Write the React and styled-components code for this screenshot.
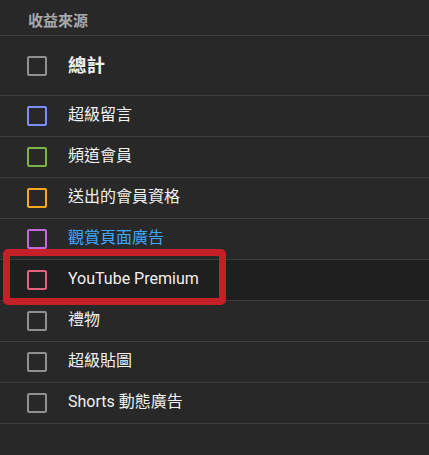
import React from "react";
import styled, { createGlobalStyle } from "styled-components";

const Global = createGlobalStyle`
  html, body { margin: 0; padding: 0; background: #282828; }
  body { font-family: Roboto, "Noto Sans CJK TC", "Noto Sans", sans-serif; }
`;

const Panel = styled.div`
  width: 429px;
  height: 455px;
  background: #282828;
  overflow: hidden;
`;

const Header = styled.div`
  height: 36px;
  box-sizing: border-box;
  display: flex;
  align-items: center;
  padding: 3px 0 0 28px;
  color: #aaaaaa;
  font-size: 15px;
  font-weight: 700;
  border-bottom: 1px solid #3e3e3e;
`;

const Row = styled.div`
  position: relative;
  height: ${(p) => (p.$big ? 59 : 40)}px;
  display: flex;
  align-items: center;
  padding-left: 27px;
  gap: 21px;
  border-bottom: 1px solid #3e3e3e;
  background: ${(p) => (p.$hover ? "#1f1f1f" : "transparent")};
`;

const Box = styled.span`
  width: 20px;
  height: 20px;
  box-sizing: border-box;
  border: 2px solid ${(p) => p.$color};
  border-radius: 2px;
  flex: none;
`;

const Label = styled.span`
  color: ${(p) => p.$color || "#f1f1f1"};
  font-size: ${(p) => (p.$big ? 18.5 : 16)}px;
  font-weight: ${(p) => (p.$big ? 700 : 400)};
  line-height: 20px;
  padding-bottom: ${(p) => (p.$big ? 0 : 3)}px;
`;

const Callout = styled.div`
  position: absolute;
  left: 3px;
  top: -11px;
  width: 223px;
  height: 56px;
  box-sizing: border-box;
  border: 7px solid #c51f28;
  border-radius: 5px;
  pointer-events: none;
`;

const items = [
  { label: "超級留言", color: "#7c8fff" },
  { label: "頻道會員", color: "#7cb342" },
  { label: "送出的會員資格", color: "#f9a825" },
  { label: "觀賞頁面廣告", color: "#c06bd8", text: "#3ea6ff" },
  { label: "YouTube Premium", color: "#e0647e", hover: true },
  { label: "禮物", color: "#909090" },
  { label: "超級貼圖", color: "#909090" },
  { label: "Shorts 動態廣告", color: "#909090" },
];

export default function App() {
  return (
    <Panel>
      <Global />
      <Header>收益來源</Header>
      <Row $big>
        <Box $color="#909090" />
        <Label $big>總計</Label>
      </Row>
      {items.map((it) => (
        <Row key={it.label} $hover={it.hover}>
          <Box $color={it.color} />
          <Label $color={it.text}>{it.label}</Label>
          {it.hover && <Callout />}
        </Row>
      ))}
    </Panel>
  );
}
